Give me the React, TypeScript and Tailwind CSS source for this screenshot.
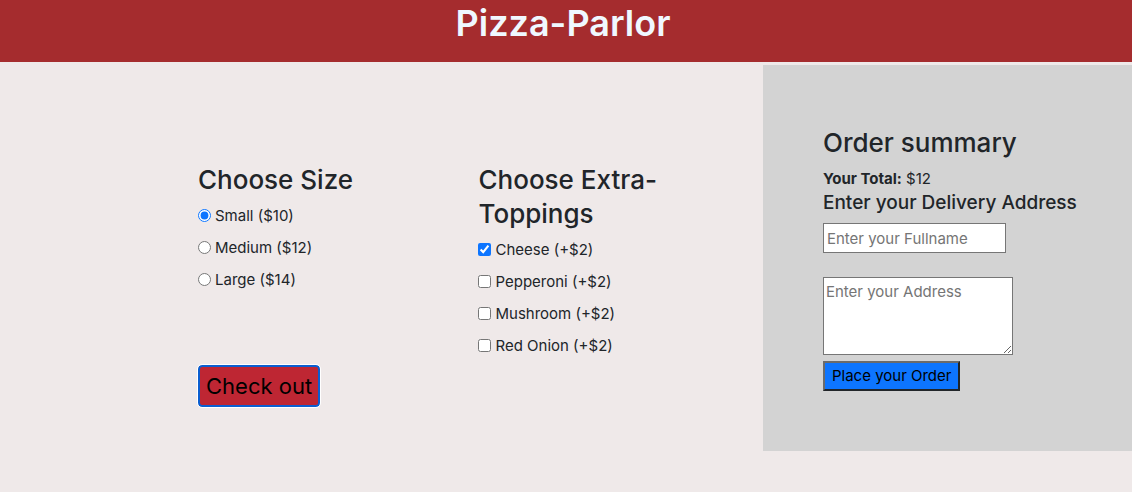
import { useState } from "react";

const sizes = [
  { name: "Small", price: 10 },
  { name: "Medium", price: 12 },
  { name: "Large", price: 14 },
];

const toppings = ["Cheese", "Pepperoni", "Mushroom", "Red Onion"];

const optionClass = "flex items-center gap-1 text-[15px] leading-6";
const headingClass = "mb-[7px] text-[26px] leading-[34px] font-medium";

export default function App() {
  const [size, setSize] = useState("Small");
  const [extras, setExtras] = useState<string[]>(["Cheese"]);

  const toggle = (name: string) =>
    setExtras((list) =>
      list.includes(name) ? list.filter((n) => n !== name) : [...list, name]
    );

  const base = sizes.find((s) => s.name === size)?.price ?? 0;
  const total = base + extras.length * 2;

  return (
    <div className="min-h-screen bg-[#efe9e9] font-['Inter','Liberation_Sans',sans-serif] text-[#212529]">
      <header className="bg-[#a52c2e] pr-1.5 pb-4">
        <h1 className="text-center text-4xl leading-[46px] font-semibold text-[#f0f8ff]">
          Pizza-Parlor
        </h1>
      </header>

      <main className="mt-[3px] flex items-start">
        <form
          className="grid flex-1 grid-cols-2 pt-[98px] pr-1 pl-[198px]"
          onSubmit={(e) => e.preventDefault()}
        >
          <div>
            <fieldset>
              <legend className={headingClass}>Choose Size</legend>
              <div className="flex flex-col gap-2">
                {sizes.map((s) => (
                  <label key={s.name} className={optionClass}>
                    <input
                      type="radio"
                      name="size"
                      className="mb-0.5 size-[13px] accent-[#0d75ff]"
                      checked={size === s.name}
                      onChange={() => setSize(s.name)}
                    />
                    {s.name} (${s.price})
                  </label>
                ))}
              </div>
            </fieldset>
            <button
              type="submit"
              className="mt-[73px] rounded-sm border-2 border-[#0b5ed0] bg-[#be2633] px-1.5 text-[22px] leading-[38px] text-black outline outline-white"
            >
              Check out
            </button>
          </div>

          <fieldset className="pr-16">
            <legend className={headingClass}>Choose Extra-Toppings</legend>
            <div className="flex flex-col gap-2">
              {toppings.map((name) => (
                <label key={name} className={optionClass}>
                  <input
                    type="checkbox"
                    className="mb-0.5 size-[13px] accent-[#0d75ff]"
                    checked={extras.includes(name)}
                    onChange={() => toggle(name)}
                  />
                  {name} (+$2)
                </label>
              ))}
            </div>
          </fieldset>
        </form>

        <aside className="w-[32.6%] bg-[#d3d3d3] pt-[61px] pr-4 pb-[60px] pl-[60px]">
          <h2 className={headingClass}>Order summary</h2>
          <p className="text-[15px] leading-6">
            <strong className="font-bold">Your Total:</strong> ${total}
          </p>
          <h3 className="text-[19px] leading-6 font-medium">
            Enter your Delivery Address
          </h3>
          <form
            className="mt-2 flex flex-col items-start"
            onSubmit={(e) => e.preventDefault()}
          >
            <input
              type="text"
              aria-label="Full name"
              placeholder="Enter your Fullname"
              className="h-[30px] w-[183px] border border-[#767676] bg-white px-[3px] text-[15px] placeholder:text-[#757575]"
            />
            <textarea
              aria-label="Address"
              placeholder="Enter your Address"
              className="mt-6 h-[78px] w-[190px] resize border border-[#767676] bg-white px-0.5 py-0.5 text-[15px] leading-6 placeholder:text-[#757575]"
            />
            <button
              type="submit"
              className="mt-1.5 border-2 border-t-[#6b6b6b] border-r-[#212529] border-b-[#212529] border-l-[#6b6b6b] bg-[#0d75ff] px-[7px] text-[15px] leading-[26px] text-black"
            >
              Place your Order
            </button>
          </form>
        </aside>
      </main>
    </div>
  );
}
